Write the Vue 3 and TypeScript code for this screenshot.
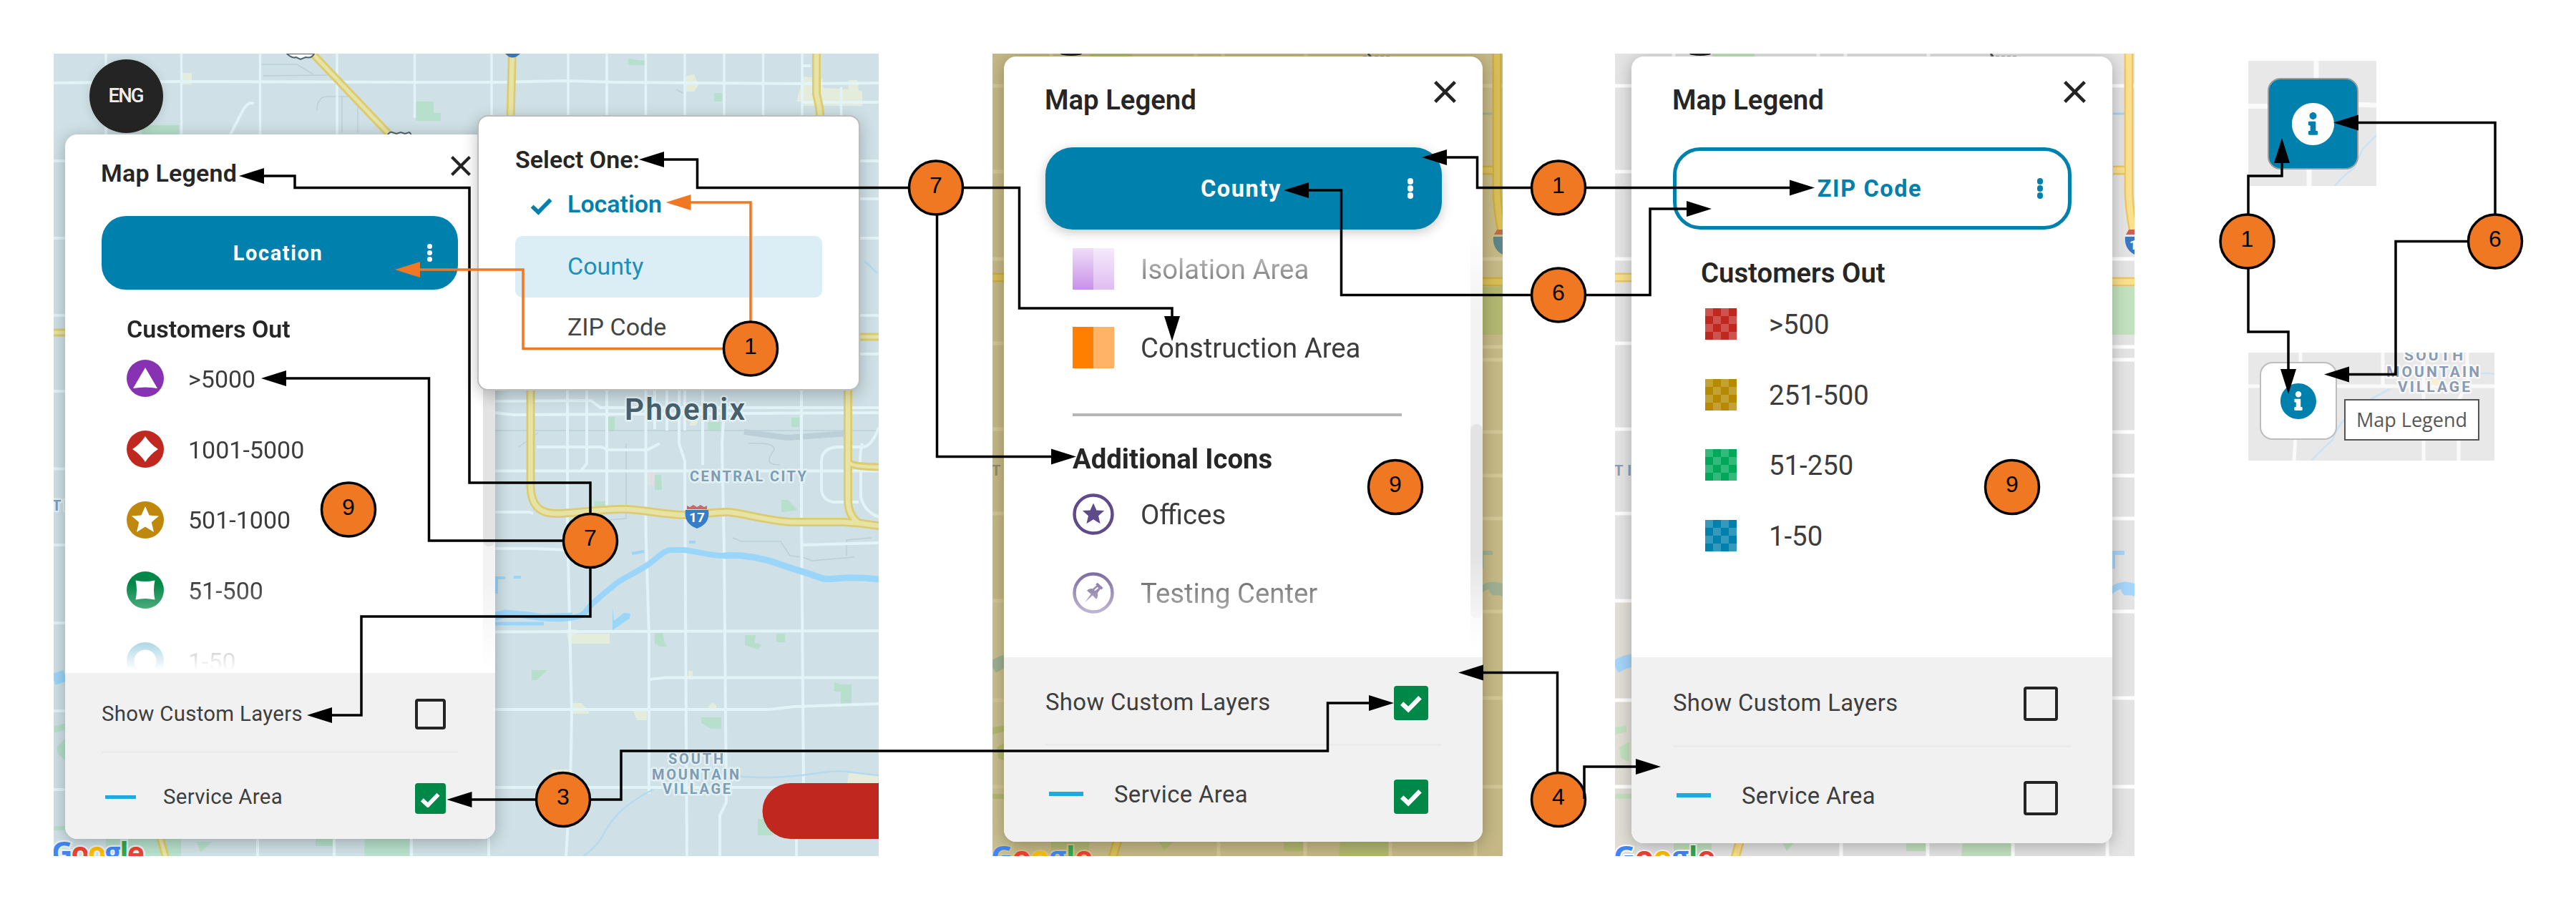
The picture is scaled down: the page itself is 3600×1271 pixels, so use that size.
<script setup lang="ts">
type Pt = [number, number]
interface Connector { pts: Pt[]; orange?: boolean }
interface Row { label: string; icon: string; color?: string }
interface Panel {
  id: string
  mode: string
  outlined?: boolean
  heading?: string
  rows: Row[]
  extraHeading?: string
  extraRows?: Row[]
  layers: boolean
  service: boolean
}

const panels: Panel[] = [
  {
    id: 'location', mode: 'Location', heading: 'Customers Out',
    rows: [
      { label: '>5000', icon: 'triangle', color: '#8731b3' },
      { label: '1001-5000', icon: 'diamond', color: '#c0281f' },
      { label: '501-1000', icon: 'star', color: '#bf870b' },
      { label: '51-500', icon: 'square', color: '#018747' },
      { label: '1-50', icon: 'circle', color: '#0080ad' },
    ],
    layers: false, service: true,
  },
  {
    id: 'county', mode: 'County',
    rows: [
      { label: 'Isolation Area', icon: 'split', color: '#b96fe2' },
      { label: 'Construction Area', icon: 'split', color: '#ff8000' },
    ],
    extraHeading: 'Additional Icons',
    extraRows: [
      { label: 'Offices', icon: 'office' },
      { label: 'Testing Center', icon: 'pin' },
      { label: '', icon: 'ring' },
    ],
    layers: true, service: true,
  },
  {
    id: 'zip', mode: 'ZIP Code', outlined: true, heading: 'Customers Out',
    rows: [
      { label: '>500', icon: 'checker', color: '#c0281f' },
      { label: '251-500', icon: 'checker', color: '#b58900' },
      { label: '51-250', icon: 'checker', color: '#00a859' },
      { label: '1-50', icon: 'checker', color: '#0080ad' },
    ],
    layers: false, service: false,
  },
]

// The last point of every connector is the arrow tip.
const connectors: Connector[] = [
  { pts: [[825, 756], [825, 675], [656, 675], [656, 262.5], [412, 262.5], [412, 246], [334, 246]] },
  { pts: [[825, 756], [599.5, 756], [599.5, 529], [365, 529]] },
  { pts: [[825, 756], [825, 862], [505, 862], [505, 1000], [429, 1000]] },
  { pts: [[787, 1118], [624.5, 1118]] },
  { pts: [[787, 1118], [868, 1118], [868, 1050], [1855.5, 1050], [1855.5, 983], [1948, 983]] },
  { pts: [[1308, 262.5], [974.5, 262.5], [974.5, 223], [893, 223]] },
  { pts: [[1308, 262.5], [1424.5, 262.5], [1424.5, 431], [1638, 431], [1638, 477]] },
  { pts: [[1309.5, 262.5], [1309.5, 638.5], [1504, 638.5]] },
  { pts: [[2178, 262.5], [2064.5, 262.5], [2064.5, 220], [1987, 220]] },
  { pts: [[2178, 262.5], [2536, 262.5]] },
  { pts: [[2178, 412.5], [1874.5, 412.5], [1874.5, 266], [1794, 266]] },
  { pts: [[2178, 412.5], [2306, 412.5], [2306, 292], [2392, 292]] },
  { pts: [[2176.5, 1118], [2176.5, 940.5], [2038, 940.5]] },
  { pts: [[3142, 337.5], [3142, 246], [3189, 246], [3189, 193]] },
  { pts: [[3142, 337.5], [3142, 464], [3198, 464], [3198, 551]] },
  { pts: [[3487, 337.5], [3487, 171.5], [3261, 171.5]] },
  { pts: [[3487, 337.5], [3348, 337.5], [3348, 523.5], [3248, 523.5]] },
  { orange: true, pts: [[1049, 487.5], [731, 487.5], [731, 377], [552, 377]] },
  { orange: true, pts: [[1049, 487.5], [1049, 283], [930.5, 283]] },
]
const lateConnector: Connector = { pts: [[2214, 1117], [2214, 1072], [2321, 1072]] }

const badges: [number, number, string][] = [
  [487, 712.5, '9'], [825, 756, '7'], [787, 1118, '3'], [1049, 487.5, '1'],
  [1308, 262.5, '7'], [1950, 681, '9'], [2178, 262.5, '1'], [2178, 412.5, '6'],
  [2178, 1118, '4'], [2812, 681, '9'], [3140.5, 337.5, '1'], [3487, 337.5, '6'],
]

function heading(c: Connector): Pt {
  const [ax, ay] = c.pts[c.pts.length - 2]
  const [bx, by] = c.pts[c.pts.length - 1]
  return [Math.sign(bx - ax), Math.sign(by - ay)]
}
function linePoints(c: Connector): string {
  const [dx, dy] = heading(c)
  const body = c.pts.map((p) => [...p] as Pt)
  const last = body[body.length - 1]
  last[0] -= dx * 30
  last[1] -= dy * 30
  return body.map((p) => p.join(',')).join(' ')
}
function headPoints(c: Connector): string {
  const [dx, dy] = heading(c)
  const [x, y] = c.pts[c.pts.length - 1]
  const bx = x - dx * 35
  const by = y - dy * 35
  return `${x},${y} ${bx - dy * 11},${by - dx * 11} ${bx + dy * 11},${by + dx * 11}`
}

const starPath = 'M0,-19 L5.6,-6.4 L19,-5.6 L8.8,3.2 L12,17 L0,9.6 L-12,17 L-8.8,3.2 L-19,-5.6 L-5.6,-6.4 Z'
const infoPath = 'M256 8C119.043 8 8 119.083 8 256c0 136.997 111.043 248 248 248s248-111.003 248-248C504 119.083 392.957 8 256 8zm0 110c23.196 0 42 18.804 42 42s-18.804 42-42 42-42-18.804-42-42 18.804-42 42-42zm56 254c0 6.627-5.373 12-12 12h-88c-6.627 0-12-5.373-12-12v-24c0-6.627 5.373-12 12-12h12v-64h-12c-6.627 0-12-5.373-12-12v-24c0-6.627 5.373-12 12-12h64c6.627 0 12 5.373 12 12v100h12c6.627 0 12 5.373 12 12v24z'

const freewayA = 'M716 70L713.5 165 741.5 545V680Q742 718 776 718C800 718 840 712 869 712S930 720 956 720 1000 715 1018 716 1080 730 1110 730H1178Q1205 731 1232 736'
const freewayB = 'M1141 70V131L1145 150 1185 545V700Q1186 722 1200 731'
const freewayC = 'M434 72L548 192M1200 471H1232M1187 647Q1192 653 1232 653M70 465H95M232 1200L224 1172'

const sideMaps = [
  { id: 'gold', w: 713, bg: '#c5b886', road: '#d1c694', yellow: '#d8bc57', edge: '#c9ab42', green: '#b1b770', water: '#9daf93', label: '#8f8b6b' },
  { id: 'grey', w: 726, bg: '#e4e4e4', road: '#ffffff', yellow: '#f9e08e', edge: '#ecc766', green: '#c2e2bf', water: '#a5d5fa', label: '#8c9ab5' },
]
const sideRoads = [45, 165, 287, 405, 525, 643, 765, 904, 1025]
const rightRoads = [45, 287, 410, 428, 529, 590, 650, 780, 901, 1025]
</script>

<template>
  <main class="canvas">
    <svg class="map map-blue" width="1153" height="1122" viewBox="75 75 1153 1122">
      <rect x="75" y="75" width="1153" height="1122" fill="#cfe1e6" />
      <g fill="#b6e0cb">
        <path d="M198 175H250V200H198ZM581 142H606V158H616V169H581ZM878 82L901 85V91H878ZM998 130H1009V142H998ZM848 583H859V603H850ZM990 590H1007V602H989ZM1106 584H1117V597H1106ZM915 664H924L925 685H915ZM830 701H847V710L831 708ZM1092 699H1101L1113 711V714L1092 716ZM915 885H927L928 896L932 904H922L915 900ZM1041 888H1056L1055 899L1065 901L1059 908L1041 902ZM1085 886H1097V898H1085ZM743 937H765L750 951H743ZM1166 954L1176 957H1190V984H1175V967H1166ZM980 1003H1008V1019H994L980 1011ZM1059 1145H1080V1168H1059Z" />
        <path d="M75 1015L91 1012V1020L76 1025ZM79 1044L91 1034V1062L81 1055ZM75 1155H91V1161H75ZM148 1173H253V1197H148ZM275 1177H296L280 1192ZM441 1173H467V1183H441ZM510 1173H572V1197H509Z" />
      </g>
      <g fill="#e4eddb">
        <path d="M255 102H268V118H252V103ZM959 106L970 104 976 118 970 128H959ZM1123 107L1150 110V123L1186 125V112H1198L1200 127 1205 128V148H1123V142H1113ZM791 880H806V886H852V900H795ZM801 983H813L823 995V998H801ZM885 993H904V1007H890ZM990 988L996 982 1001 986V992H991ZM770 1076H795V1100H776ZM1186 1081L1227 1085V1096H1184ZM965 586H977L972 595H964ZM962 938H968V950H962Z" />
        <path d="M904 660H915L914 680 904 677Z" fill="#e1dee4" />
      </g>
      <g fill="none" stroke="#bccfd9" stroke-width="1.500">
        <path d="M365 90H415L438 104M368 106L457 105M443 155Q443 136 456 135H500M478 136V185M500 140V185M945 125L956 131M692 602H1228M725 625L752 605M1045 620Q1090 618 1080 632C1068 648 1080 650 1090 650M875 620V725L850 727M1024 752L1036 757H1091L1104 777 1122 779 1135 784 1194 779M1183 777V755L1218 752" />
        <path d="M1040 604L1100 612 1185 606" stroke-width="8" />
      </g>
      <g fill="none" stroke="#e3f4f8" stroke-width="4">
        <path d="M148 75V190M253.5 75V190M363.5 75V190M471 75V190M579.5 75V165M687 75V165M794 75V165M848 75V165M902.5 75V165M957 75V165M1012 75V165M1066.5 75V165M1121 75V165M1175.5 122V165" stroke-width="3.5" />
        <path d="M75 116L250 114 580 115 700 115 790 113 860 115 1120 117 1228 116M322 188L340 153Q348 141 355 145M1121 92H1133M1121 143H1228" />
        <path d="M75 225H91M75 333H91M75 441H91M75 547H91M75 655.5H91M75 762H91M75 871H91M75 994H91M75 1104H91M1200 225H1228M1200 278H1228M1200 333H1228M1200 441H1228M1200 495H1228" />
        <path d="M692 561L826 560 839 570H1228M692 577L716 580 1228 577M692 658.5H1228M692 716H740L745 718M692 767H745L820 770M692 883.5L1228 882M907 950L930 947.5H1228M692 992H1075L1110 988 1228 984M692 1101H1228M750 625H840L850 629H905L922 620M1120 762L1228 759" />
        <path d="M793 545V740L799 1000 797 1100 791 1197M820 545V648L812 658M848 545V710M902.5 545V740L907 890V1110M949 545V620L957 645 958 850 960 1197M932 545V602M915 545V600M1011 590L1009 620 1012 770 1015 1122 1006 1140V1197M957 545V602M982 545V650M1120 545V720L1123 1100M1113 1172V1197M683 1172V1197M1228 598Q1218 625 1205 625H1170Q1148 627 1148 645V685Q1150 700 1165 702H1200M1205 620Q1200 640 1203 660V695Q1208 715 1228 723" />
        <path d="M360 1172V1197M467 1172V1197M575 1172V1197" />
      </g>
      <g fill="none" stroke="#9ad5fa">
        <path d="M692 864C720 852 750 868 786 865S815 857 825 847 850 825 861 816 895 798 909 787 930 768 940 769H956C980 772 995 778 1014 777" stroke-width="8" />
        <path d="M690 872H760" stroke-width="5" />
        <path d="M690 860L706 856 740 859 757 862 800 860" stroke-width="7" />
        <path d="M1012 777C1035 775 1065 780 1087 788S1120 798 1150 809C1165 812 1175 804 1228 810" stroke-width="9" />
        <path d="M692 808H706M694 808V830M718 807H728M883 774L900 771M963 758H972" stroke-width="4" />
        <path d="M75 950L91 945" stroke-width="16" />
        <path d="M1030 1085C1070 1090 1120 1085 1150 1080S1200 1082 1228 1084M913 1104C880 1120 860 1140 850 1155S840 1180 815 1197M919 170Q960 158 990 170M1208 365L1226 382" stroke-width="2.5" stroke="#b3daf0" />
      </g>
      <path d="M856 848L858 868 872 857 881 858 880 865 856 881Z" fill="#9ad5fa" />
      <g fill="none">
        <path :d="freewayA" stroke="#dccb71" stroke-width="12" />
        <path :d="freewayB" stroke="#dccb71" stroke-width="12" />
        <path :d="freewayC" stroke="#dccb71" stroke-width="11" />
        <path :d="freewayA" stroke="#e6e3a5" stroke-width="6.500" />
        <path :d="freewayB" stroke="#e6e3a5" stroke-width="6.500" />
        <path :d="freewayC" stroke="#e6e3a5" stroke-width="5" />
      </g>
      <path d="M401 75Q408 82 414 80L420 83 427 80Q436 82 439 75Z" fill="#f5fafa" stroke="#4f626b" stroke-width="2" />
      <path d="M541 190Q544 184 548 185L554 187 560 185 566 187 572 185Q575 187 574 190Z" fill="#f5fafa" stroke="#4f626b" stroke-width="2" />
      <path d="M706 75Q716 86 727 75Z" fill="#2f78c4" />
      <g transform="translate(974 722)">
        <path d="M-16 -9H16Q19 10 0 17Q-19 10 -16 -9Z" fill="#347dc9" />
        <path d="M-14 -10V-15L-10 -13 -5 -16 0 -13 5 -16 10 -13 14 -15V-10Z" fill="#c8676c" />
        <text x="0" y="8" class="shield" text-anchor="middle">17</text>
      </g>
      <g class="label" paint-order="stroke" stroke="#e3f1f5" stroke-width="5" stroke-linejoin="round">
        <text x="873" y="587" font-size="42" textLength="168" class="city" fill="#46606e">Phoenix</text>
        <text x="964" y="673" font-size="20" textLength="163" fill="#7e9db5">CENTRAL CITY</text>
        <text x="934" y="1068" font-size="20" textLength="77" fill="#7e9db5">SOUTH</text>
        <text x="911" y="1089.5" font-size="20" textLength="122" fill="#7e9db5">MOUNTAIN</text>
        <text x="926" y="1109.5" font-size="20" textLength="95" fill="#7e9db5">VILLAGE</text>
        <text x="73" y="714" font-size="20" textLength="22" fill="#7e9db5">TI</text>
      </g>
      <text class="google" x="72" y="1207" font-size="41" textLength="130" paint-order="stroke" stroke="#e8f2f4" stroke-width="5"><tspan fill="#4285f4">G</tspan><tspan fill="#ea4335">o</tspan><tspan fill="#fbbc05">o</tspan><tspan fill="#4285f4">g</tspan><tspan fill="#34a853">l</tspan><tspan fill="#ea4335">e</tspan></text>
      <path d="M1228 1095H1104.500A39 39 0 0 0 1104.500 1173H1228Z" fill="#c0281f" />
    </svg>

    <svg v-for="m in sideMaps" :key="m.id" class="map" :class="'map-' + m.id" :width="m.w" height="1122" :viewBox="`0 0 ${m.w} 1122`">
      <rect :width="m.w" height="1122" :fill="m.bg" />
      <rect x="0" y="766" width="30" height="356" fill="#d9cfa8" opacity=".25" />
      <g :fill="m.green">
        <path d="M136 0H195V8H136ZM0 942L16 940V948L0 952ZM6 970L20 962V990L8 985ZM0 1035H24V1042H0ZM82 1100H135V1122H82ZM232 1100H254L240 1115ZM407 1100H434V1115H407ZM486 1100H556V1122H484Z" />
        <path :d="`M${m.w - 40} 326H${m.w}V393H${m.w - 40}Z`" />
      </g>
      <g :stroke="m.road" stroke-width="5">
        <line v-for="y in sideRoads" :key="'l' + y" x1="0" :x2="24" :y1="y" :y2="y" />
        <line v-for="y in rightRoads" :key="'r' + y" :x1="m.w - 40" :x2="m.w" :y1="y" :y2="y" />
        <path d="M82 0V8M284 0V8M322 0V8M438 0V8M316 1098V1122M437 1098V1122M556 1098V1122" />
        <path :d="`M${m.w - 38} 1098V1122`" />
      </g>
      <g fill="none" :stroke="m.water">
        <path :d="`M${m.w - 34} 698H${m.w - 14}M${m.w - 30} 698V720`" stroke-width="6" />
        <path :d="`M${m.w - 34} 752Q${m.w - 18} 738 ${m.w} 746V754Q${m.w - 20} 746 ${m.w - 12} 753H${m.w}`" stroke-width="9" />
        <path d="M0 858Q12 850 26 848" stroke-width="18" />
        <path :d="`M${m.w - 30} 84H${m.w - 12}`" stroke-width="3" />
      </g>
      <g fill="none">
        <path :d="`M${m.w - 8} -3V190Q${m.w - 8} 215 ${m.w - 1} 250M0 313H24M${m.w - 36} 319H${m.w}M168 1124L176 1096M${m.w - 30} 163H${m.w - 14}`" :stroke="m.edge" stroke-width="13" />
        <path :d="`M${m.w - 8} -3V190Q${m.w - 8} 215 ${m.w - 1} 250M0 313H24M${m.w - 36} 319H${m.w}M168 1124L176 1096M${m.w - 30} 163H${m.w - 14}`" :stroke="m.yellow" stroke-width="8" />
      </g>
      <g :transform="`translate(${m.w + 4} 263)`">
        <path d="M-17 -7H17Q19 12 0 20Q-19 12 -17 -7Z" :fill="m.id === 'grey' ? '#3b78c4' : '#5c8489'" />
        <path d="M-16 -10L-12 -17H8V-10Z" :fill="m.id === 'grey' ? '#cf5f58' : '#bd6b45'" />
        <text v-if="m.id === 'grey'" x="-11" y="11" class="shield">1</text>
      </g>
      <ellipse :cx="m.id === 'grey' ? 119 : 110" cy="0" rx="15" ry="3" fill="#222" />
      <path :d="`M525 0L530 6M${m.id === 'grey' ? 524 : 518} 5h40`" stroke="#555" stroke-width="3" stroke-dasharray="5 3" />
      <text class="label" x="-1" y="590" font-size="20" textLength="24" :fill="m.label">TI</text>
      <text class="google" x="-2" y="1138" font-size="42" textLength="142" paint-order="stroke" :stroke="m.road" stroke-width="4"><tspan fill="#4285f4">G</tspan><tspan fill="#ea4335">o</tspan><tspan fill="#fbbc05">o</tspan><tspan fill="#4285f4">g</tspan><tspan fill="#34a853">l</tspan><tspan fill="#ea4335">e</tspan></text>
    </svg>

    <div class="language">ENG</div>

    <section v-for="p in panels" :key="p.id" class="panel" :class="p.id">
      <header class="head">
        <h2 class="title">Map Legend</h2>
        <svg class="close" viewBox="0 0 28 28"><path d="M1.500 1.500L26.500 26.500M26.500 1.500L1.500 26.500" stroke="#242424" stroke-width="4.200" /></svg>
      </header>
      <button class="mode" :class="{ outlined: p.outlined }">
        <span>{{ p.mode }}</span>
        <i class="dots"><b /><b /><b /></i>
      </button>
      <div class="body">
        <div class="list">
          <h3 v-if="p.heading" class="subtitle">{{ p.heading }}</h3>
          <div v-for="r in p.rows" :key="r.label" class="row">
            <span v-if="r.icon === 'split'" class="split" :style="{ '--c': r.color }" />
            <span v-else-if="r.icon === 'checker'" class="checker" :style="{ '--c': r.color }" />
            <svg v-else class="icon" viewBox="-26 -26 52 52">
              <circle r="26" :fill="r.color" />
              <path v-if="r.icon === 'triangle'" d="M0 -15L17 14Q0 11 -17 14Z" fill="#fff" />
              <path v-else-if="r.icon === 'diamond'" d="M0 -18Q7 -7 18 0Q7 7 0 18Q-7 7 -18 0Q-7 -7 0 -18Z" fill="#fff" />
              <path v-else-if="r.icon === 'star'" :d="starPath" fill="#fff" />
              <path v-else-if="r.icon === 'square'" d="M-13.500 -13.500Q0 -10.500 13.500 -13.500Q10.500 0 13.500 13.500Q0 10.500 -13.500 13.500Q-10.500 0 -13.500 -13.500Z" fill="#fff" />
              <circle v-else r="15.500" fill="#fff" />
            </svg>
            <span class="row-text">{{ r.label }}</span>
          </div>
          <template v-if="p.extraRows">
            <div class="rule" />
            <h3 class="subtitle strong">{{ p.extraHeading }}</h3>
            <div v-for="r in p.extraRows" :key="r.icon" class="row">
              <svg class="icon" viewBox="-29 -29 58 58">
                <circle r="26.500" fill="none" stroke="#5f4b8b" stroke-width="4.500" />
                <path v-if="r.icon === 'office'" :d="starPath" transform="scale(.8) translate(0 -.5)" fill="#5f4b8b" />
                <g v-else-if="r.icon === 'pin'" transform="rotate(42) scale(.9)" fill="#5f4b8b">
                  <path d="M-6 -16H6V-12H4L5 -4Q10 -1 10 4H1.500L0 20L-1.500 4H-10Q-10 -1 -5 -4L-4 -12H-6Z" />
                  <path d="M-1.500 -11H1L0 -4H-2Z" fill="#fff" />
                </g>
              </svg>
              <span class="row-text">{{ r.label }}</span>
            </div>
          </template>
        </div>
        <div v-if="!p.outlined" class="track"><div class="thumb" /></div>
      </div>
      <footer class="foot">
        <div class="option">
          <span class="option-text">Show Custom Layers</span>
          <span class="check" :class="{ on: p.layers }"><svg v-if="p.layers" viewBox="0 0 30 24"><path d="M3 12L11.500 20L27 4" /></svg></span>
        </div>
        <div class="option second">
          <span class="dash" />
          <span class="option-text">Service Area</span>
          <span class="check" :class="{ on: p.service }"><svg v-if="p.service" viewBox="0 0 30 24"><path d="M3 12L11.500 20L27 4" /></svg></span>
        </div>
      </footer>
    </section>

    <section class="popup">
      <h3 class="popup-title">Select One:</h3>
      <div class="choice chosen"><svg class="tick" viewBox="0 0 30 24"><path d="M2.500 12L11 20L27.500 3" /></svg>Location</div>
      <div class="choice hovered">County</div>
      <div class="choice plain">ZIP Code</div>
    </section>

    <svg class="map tile-a" width="179" height="175" viewBox="3142 85 179 175">
      <rect x="3142" y="85" width="179" height="175" fill="#e8e8e8" />
      <g fill="none" stroke="#fafafa" stroke-width="7"><path d="M3237 85V115M3227 230V260M3142 148.500H3172M3290 146L3321 147" /></g>
      <path d="M3263 260Q3275 245 3290 235 3295 222 3302 208L3321 189" fill="none" stroke="#c9e2f5" stroke-width="2.500" />
    </svg>
    <svg class="map tile-b" width="344" height="151" viewBox="3142 493 344 151">
      <rect x="3142" y="493" width="344" height="151" fill="#e8e8e8" />
      <g fill="none" stroke="#fafafa" stroke-width="5"><path d="M3215 493V510M3208 612L3206 644M3142 540H3160M3264 540H3486M3330 493V540M3387 493V644M3448 493V535L3436 560V644" /></g>
      <path d="M3230 644Q3245 628 3260 615 3268 590 3290 575 3310 558 3340 544M3450 525Q3470 520 3486 523" fill="none" stroke="#c9e2f5" stroke-width="2.500" />
      <path d="M3392 535L3402 529 3420 534 3405 540Z" fill="#f7efd2" />
      <g class="label" font-size="21" fill="#8a9ab3" paint-order="stroke" stroke="#f8f8f8" stroke-width="5" stroke-linejoin="round">
        <text x="3360" y="504" textLength="82">SOUTH</text>
        <text x="3335" y="526.500" textLength="130">MOUNTAIN</text>
        <text x="3351" y="547.500" textLength="101">VILLAGE</text>
      </g>
    </svg>
    <div class="info info-on"><svg viewBox="8 8 496 496"><path :d="infoPath" /></svg></div>
    <div class="info info-off"><svg viewBox="8 8 496 496"><path :d="infoPath" /></svg></div>
    <div class="tooltip">Map Legend</div>

    <svg class="overlay" width="3600" height="1271" viewBox="0 0 3600 1271">
      <g v-for="(c, i) in connectors" :key="i" :class="c.orange ? 'arrow orange' : 'arrow'">
        <polyline :points="linePoints(c)" />
        <polygon :points="headPoints(c)" />
      </g>
      <g v-for="([x, y, n], i) in badges" :key="'b' + i">
        <circle :cx="x" :cy="y" r="37.500" class="badge" />
        <text :x="x" :y="y + 7" class="badge-text">{{ n }}</text>
      </g>
      <g class="arrow">
        <polyline :points="linePoints(lateConnector)" />
        <polygon :points="headPoints(lateConnector)" />
      </g>
    </svg>
  </main>
</template>

<style>
body { margin: 0; background: #fff; }
</style>

<style scoped>
.canvas { position: relative; width: 3600px; height: 1271px; overflow: hidden; background: #fff; font-family: Roboto, "Liberation Sans", sans-serif; }
h2, h3 { margin: 0; font-weight: 600; }
.map, .panel, .popup, .language, .info, .tooltip, .overlay { position: absolute; box-sizing: border-box; }
.map-blue { left: 75px; top: 75px; }
.map-gold { left: 1387px; top: 75px; }
.map-grey { left: 2257px; top: 75px; }
.tile-a { left: 3142px; top: 85px; }
.tile-b { left: 3142px; top: 493px; }
.label { font-weight: 700; }
.city { font-weight: 600; }
.google { font-family: "Open Sans", sans-serif; font-weight: 700; }
.shield { font-size: 19px; font-weight: 700; fill: #fff; }

.language { left: 125px; top: 83px; width: 103px; height: 103px; border-radius: 50%; background: #242424; color: #eee; font-size: 27.500px; font-weight: 500; line-height: 101px; text-align: center; letter-spacing: -2px; text-indent: -2px; box-shadow: 0 2px 14px rgba(0, 0, 0, .12); }

.panel { display: flex; flex-direction: column; background: #fff; border-radius: 17px; color: #262626; box-shadow: 0 4px 22px rgba(0, 0, 0, .27); clip-path: inset(-30px -30px -20px -16px); }
.location { left: 91px; top: 188px; width: 601px; height: 985px; font-size: 34px; }
.county { left: 1403px; top: 79px; width: 669px; height: 1098px; font-size: 38.300px; clip-path: inset(-4px -28px -20px -16px); }
.zip { left: 2280px; top: 79px; width: 672px; height: 1100px; font-size: 38.300px; clip-path: inset(-4px -31px -18px -23px); }
.head { flex: none; display: flex; justify-content: space-between; align-items: flex-start; height: 127px; box-sizing: border-box; padding: 39px 37px 0 57px; }
.title { font-size: 1em; line-height: 44px; }
.close { width: 31px; height: 31px; margin-top: -5px; }
.location .head { height: 114px; padding: 34px 34px 0 50px; }
.location .title, .location .subtitle { line-height: 40px; }
.location .title { letter-spacing: .2px; }
.location .close { width: 28px; height: 28px; margin-top: -4px; }
.mode { position: relative; flex: none; display: flex; align-items: center; justify-content: center; height: 115px; margin: 0 57px 0 58px; padding: 0 7px 0 0; border: 0; border-radius: 38px; background: #0080ad; color: #fff; font: 700 32.500px Roboto, sans-serif; letter-spacing: 1.600px; }
.county .mode { box-shadow: 0 4px 16px rgba(0, 0, 0, .22); }
.location .mode { height: 103px; margin: 0 52px 0 51px; padding: 0 5px 0 0; border-radius: 34px; font-size: 29px; }
.mode.outlined { border: 5px solid #0080ad; background: #fff; color: #0080ad; }
.dots { position: absolute; right: 40px; display: flex; flex-direction: column; gap: 1.500px; }
.outlined .dots { right: 35px; }
.dots b { width: 8.500px; height: 8.500px; border-radius: 50%; background: currentColor; }
.location .dots { right: 36px; }
.location .dots b { width: 7.500px; height: 7.500px; }
.body { position: relative; flex: 1; min-height: 0; overflow: hidden; display: flex; justify-content: space-between; background: #fff; }
.county .body { -webkit-mask-image: linear-gradient(transparent 0, #000 110px, #000 455px, transparent 590px); mask-image: linear-gradient(transparent 0, #000 110px, #000 455px, transparent 590px); }
.location .body { -webkit-mask-image: linear-gradient(#000 410px, transparent 532px); mask-image: linear-gradient(#000 410px, transparent 532px); }
.list { flex: 1; padding-left: 96px; }
.location .list { padding: 35px 0 0 86px; }
.zip .list { padding: 39px 0 0 97px; }
.subtitle { font-size: 1em; line-height: 44px; }
.strong { font-weight: 700; }
.row { display: flex; align-items: center; height: 110px; gap: 37px; color: #3c3c3c; white-space: nowrap; }
.row-text { padding-top: 1px; }
.location .row { height: 98.700px; gap: 34px; }
.zip .row { height: 98.500px; gap: 45px; padding: 0 0 0 6px; box-sizing: border-box; }
.icon { flex: none; width: 58px; height: 58px; }
.location .icon { width: 52px; height: 52px; }
.split { width: 58px; height: 58px; background: linear-gradient(90deg, transparent 50%, rgba(255, 255, 255, .4) 50%), var(--c); }
.checker { width: 44px; height: 44px; background: repeating-conic-gradient(transparent 0 25%, rgba(255, 255, 255, .2) 0 50%) 0 0 / 22px 22px, var(--c); }
.rule { width: 460px; height: 4px; margin: 37px 0 38px; background: #b6b6b6; }
.track { flex: none; width: 17px; height: 100%; background: #f3f3f3; }
.thumb { height: 359px; background: #e3e3e3; border-radius: 9px; }
.county .thumb { height: 272px; margin-top: 272px; }
.foot { flex: none; height: 258px; background: #f1f1f1; border-radius: 0 0 17px 17px; box-sizing: border-box; padding: 0 57px 0 58px; font-size: 32.800px; letter-spacing: .400px; color: #3e3e3e; }
.zip .foot { height: 260px; }
.location .foot { height: 232px; padding: 0 52px 0 51px; font-size: 29.400px; letter-spacing: .300px; }
.option { display: flex; align-items: center; height: 124px; box-sizing: border-box; border-bottom: 3px solid #ebebeb; padding: 3px 19px 0 0; }
.option-text { padding-top: 1px; }
.second { height: 134px; border: 0; padding-top: 0; }
.zip .option { height: 126px; }
.zip .second { height: 134px; }
.location .option { height: 112px; padding-right: 17px; }
.location .second { height: 120px; }
.dash { width: 48px; height: 6px; margin: 0 43px 0 5px; background: #1eaadc; }
.location .dash { width: 43px; height: 5px; margin: 3px 38px 0 5px; }
.check { display: flex; align-items: center; justify-content: center; width: 48px; height: 48px; box-sizing: border-box; margin: 3px 0 0 auto; border: 4.500px solid #242424; border-radius: 4px; }
.location .check { width: 43px; height: 43px; }
.check.on { border: 0; background: #008848; }
.second .check { margin-top: 7px; }
.check svg { width: 66%; margin-top: 3px; }
.check path, .tick path { fill: none; stroke: #fff; stroke-width: 6; }

.popup { left: 667px; top: 161px; width: 535px; height: 385px; padding: 37px 52px 0 51px; border: 2px solid #bcbcbc; border-radius: 15px; background: #fff; font-size: 34px; box-shadow: 0 6px 22px rgba(0, 0, 0, .24); }
.popup-title { height: 58px; font-size: 34px; line-height: 46px; color: #262626; }
.choice { position: relative; width: 429px; height: 86px; box-sizing: border-box; padding-left: 73px; border-radius: 10px; line-height: 84px; color: #444; }
.chosen { height: 72px; line-height: 55px; font-weight: 600; color: #0080ad; }
.hovered { background: #dbeef6; color: #1d8fb8; }
.plain { line-height: 83px; }
.tick { position: absolute; left: 21px; top: 18px; width: 31px; height: 25px; }
.tick path { stroke: #0080ad; stroke-width: 5.500; }

.info { display: flex; align-items: center; justify-content: center; border-radius: 18px; }
.info-on { left: 3169px; top: 109px; width: 127px; height: 128px; border: 2px solid #9b9b9b; background: #0080ad; fill: #fff; }
.info-on svg { width: 59px; height: 59px; }
.info-off { left: 3158px; top: 506px; width: 108px; height: 109px; border: 2px solid #bdbdbd; background: #fff; fill: #0080ad; }
.info-off svg { width: 50px; height: 50px; }
.tooltip { left: 3276px; top: 558px; width: 189px; height: 58px; border: 2px solid #555; background: #fff; color: #575757; font: 27px/54px "Open Sans", sans-serif; text-align: center; white-space: nowrap; }

.arrow polyline { fill: none; stroke: #000; stroke-width: 3.500; }
.arrow polygon { fill: #000; }
.orange polyline { stroke: #f07823; }
.orange polygon { fill: #f07823; }
.badge { fill: #f07823; stroke: #000; stroke-width: 3.500; }
.badge-text { font: 32px "Liberation Sans", sans-serif; text-anchor: middle; fill: #000; }
</style>
